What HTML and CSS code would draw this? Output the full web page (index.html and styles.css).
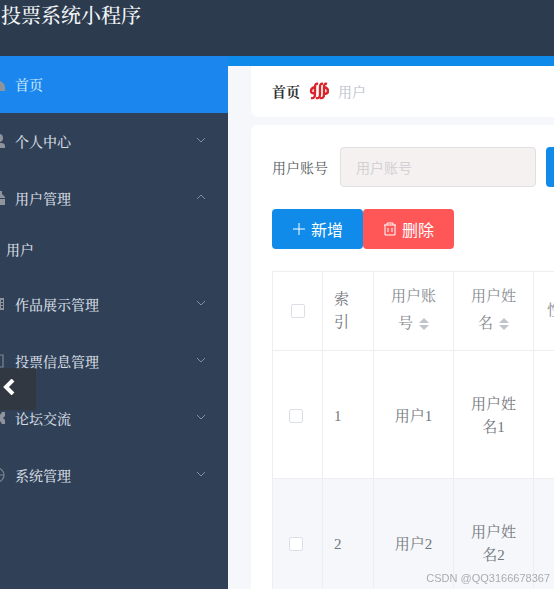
FILE: index.html
```html
<!DOCTYPE html>
<html lang="zh-CN">
<head>
  <meta charset="UTF-8">
  <meta name="viewport" content="width=device-width, initial-scale=1.0">
  <title>投票系统小程序</title>
  <link rel="stylesheet" href="styles.css">
</head>
<body>
  <header class="navbar">
    <h1 class="title">投票系统小程序</h1>
  </header>
  <div class="layout">
    <nav class="sidebar">
      <a class="menu-item active" href="#">
        <svg class="menu-icon" viewBox="0 0 18 18"><path d="M9 3l7 5q2 1 2 4v4h-6v-4H7v4H1V9z"/></svg>
        <span class="menu-text">首页</span>
      </a>
      <a class="menu-item" href="#">
        <svg class="menu-icon" viewBox="0 0 18 18"><circle cx="12" cy="6" r="4"/><path d="M5 16v-2q0-3 4-3h5q4 0 4 3v2z"/></svg>
        <span class="menu-text">个人中心</span>
        <svg class="arrow" viewBox="0 0 10 6"><path d="M1 1l4 4 4-4"/></svg>
      </a>
      <a class="menu-item" href="#">
        <svg class="menu-icon" viewBox="0 0 18 18"><path d="M1 5h5V2h9v3l3 3v1H1zM1 10h17v6H1z"/></svg>
        <span class="menu-text">用户管理</span>
        <svg class="arrow" viewBox="0 0 10 6"><path d="M1 5l4-4 4 4"/></svg>
      </a>
      <a class="submenu-item" href="#">用户</a>
      <a class="menu-item" href="#">
        <svg class="menu-icon" viewBox="0 0 18 18"><path fill-rule="evenodd" d="M2 3h15v12H2zM14 5v2h2V5zM14 8v2h2V8zM14 11v2h2v-2z"/></svg>
        <span class="menu-text">作品展示管理</span>
        <svg class="arrow" viewBox="0 0 10 6"><path d="M1 1l4 4 4-4"/></svg>
      </a>
      <a class="menu-item" href="#">
        <svg class="menu-icon line" viewBox="0 0 18 18"><path d="M3 3h13v12H3z"/></svg>
        <span class="menu-text">投票信息管理</span>
        <svg class="arrow" viewBox="0 0 10 6"><path d="M1 1l4 4 4-4"/></svg>
      </a>
      <a class="menu-item" href="#">
        <svg class="menu-icon" viewBox="0 0 18 18"><path d="M1 3h9l3 3 2-3h3v4l-2 2 2 2v4h-3l-2-3-3 3H1z"/></svg>
        <span class="menu-text">论坛交流</span>
        <svg class="arrow" viewBox="0 0 10 6"><path d="M1 1l4 4 4-4"/></svg>
      </a>
      <a class="menu-item" href="#">
        <svg class="menu-icon line" viewBox="0 0 18 18"><circle cx="10" cy="9" r="7"/><path d="M3 9h14M10 2v14"/></svg>
        <span class="menu-text">系统管理</span>
        <svg class="arrow" viewBox="0 0 10 6"><path d="M1 1l4 4 4-4"/></svg>
      </a>
    </nav>

    <main class="main">
      <div class="breadcrumb">
        <a class="crumb-home" href="#">首页</a>
        <svg class="crumb-icon" viewBox="0 0 20 18"><path d="M9 2Q6 1 6 5v7q0 5-4 4M14 2q-3-1-3 3v7q0 5-4 4M18 2q-3-1-3 3v7q0 5-4 4M6 5Q2 6 2 9t4 2M15 5q4 1 4 4t-4 3"/></svg>
        <span class="crumb-current">用户</span>
      </div>

      <section class="panel">
        <form class="search">
          <label class="search-label" for="account">用户账号</label>
          <input class="search-input" id="account" type="text" placeholder="用户账号">
          <button class="btn btn-primary" type="button">查询</button>
        </form>
        <div class="actions">
          <button class="btn btn-primary" type="button">
            <svg class="btn-icon" viewBox="0 0 14 14"><path d="M7 1v12M1 7h12"/></svg>新增
          </button>
          <button class="btn btn-danger" type="button">
            <svg class="btn-icon" viewBox="0 0 14 14"><path d="M1 3h12M4 3V1h6v2M2 3v10h10V3M5 6v4M9 6v4"/></svg>删除
          </button>
        </div>
        <table class="table">
          <colgroup>
            <col class="col-check"><col class="col-index"><col class="col-data"><col class="col-data"><col class="col-data">
          </colgroup>
          <thead>
            <tr>
              <th><input type="checkbox" aria-label="全选"></th>
              <th class="index">索引</th>
              <th class="sortable">用户账号 <svg class="sort" viewBox="0 0 10 12"><path d="M0 5l5-5 5 5zM0 7h10l-5 5z"/></svg></th>
              <th class="sortable">用户姓名 <svg class="sort" viewBox="0 0 10 12"><path d="M0 5l5-5 5 5zM0 7h10l-5 5z"/></svg></th>
              <th class="sortable gender">性别 <svg class="sort" viewBox="0 0 10 12"><path d="M0 5l5-5 5 5zM0 7h10l-5 5z"/></svg></th>
            </tr>
          </thead>
          <tbody>
            <tr>
              <td class="check"><input type="checkbox" aria-label="选择用户1"></td>
              <td class="index">1</td>
              <td>用户1</td>
              <td>用户姓名1</td>
              <td></td>
            </tr>
            <tr>
              <td class="check"><input type="checkbox" aria-label="选择用户2"></td>
              <td class="index">2</td>
              <td>用户2</td>
              <td>用户姓名2</td>
              <td></td>
            </tr>
          </tbody>
        </table>
      </section>
    </main>
  </div>

  <button class="prev" type="button" aria-label="上一张">
    <svg viewBox="0 0 12 16"><path d="M10 1L3 8l7 7"/></svg>
  </button>
  <div class="watermark">CSDN @QQ3166678367</div>
</body>
</html>
```
FILE: styles.css
```css
* {
  box-sizing: border-box;
}
body {
  margin: 0;
  font-family: "Liberation Serif", "Noto Serif CJK SC", "Noto Sans CJK SC", serif;
  font-size: 14px;
  background: #f5f7fa;
  overflow: hidden;
}
a {
  color: inherit;
  text-decoration: none;
}
.navbar {
  height: 56px;
  padding-left: 1px;
  background: #2c3b4d;
}
.title {
  margin: 0;
  font-size: 20px;
  font-weight: 500;
  line-height: 32px;
  color: #f2f5f8;
}
.layout {
  display: flex;
  height: calc(100vh - 56px);
}
.sidebar {
  flex: 0 0 228px;
  background: #304056;
  color: #d3dae2;
  font-weight: 500;
  overflow: hidden;
}
.menu-item {
  display: flex;
  align-items: center;
  gap: 10px;
  height: 57px;
  padding: 0 22px 2px 0;
}
.menu-item.active {
  background: #1b87ee;
  color: #c5e6fb;
}
/* icons are tucked under the left edge */
.menu-icon {
  flex: none;
  width: 18px;
  height: 18px;
  margin-left: -13px;
  fill: #8f949c;
}
.menu-icon.line {
  fill: none;
  stroke: #7f8894;
  stroke-width: 1.2;
}
.menu-text {
  flex: 1;
}
.arrow {
  width: 10px;
  height: 6px;
  margin-bottom: 2px;
  fill: none;
  stroke: #8090a0;
}
.submenu-item {
  display: block;
  height: 49px;
  padding-left: 6px;
  line-height: 48px;
}
.main {
  flex: 1;
  min-width: 0;
  padding-left: 23px;
  border-top: 10px solid #0e8bea;
  overflow: hidden;
}
.breadcrumb {
  display: flex;
  align-items: center;
  gap: 9px;
  height: 51px;
  padding: 0 0 2px 21px;
  background: #fff;
  border-radius: 0 0 0 8px;
}
.crumb-home {
  font-weight: 700;
  color: #303133;
}
.crumb-icon {
  width: 20px;
  height: 18px;
  fill: none;
  stroke: #d9252b;
  stroke-width: 2.4;
}
.crumb-current {
  color: #b9bec9;
}
.panel {
  min-height: 100%;
  margin-top: 8px;
  padding: 22px 0 0 21px;
  background: #fff;
  border-radius: 6px 0 0 0;
}
.search {
  display: flex;
  align-items: center;
  color: #555a60;
}
.search-label {
  flex: none;
}
.search-input {
  flex: none;
  width: 196px;
  height: 40px;
  margin: 0 10px 0 12px;
  padding: 0 15px;
  border: 1px solid #e0e0e2;
  border-radius: 4px;
  background: #f4f1f0;
  font-family: "Noto Sans CJK SC", sans-serif;
  font-size: 14px;
}
.search-input::placeholder {
  color: #d2d2d6;
}
.btn {
  display: flex;
  flex: none;
  align-items: center;
  gap: 5px;
  height: 40px;
  padding: 0 19px;
  border: 1px solid transparent;
  border-radius: 4px;
  color: #fff;
  font-family: "Noto Sans CJK SC", sans-serif;
  font-size: 16px;
}
.btn-primary {
  background: #108bea;
}
.btn-danger {
  background: #ff5758;
}
.btn-icon {
  width: 14px;
  height: 14px;
  fill: none;
  stroke: #fff;
}
.actions {
  display: flex;
  margin: 22px 0;
}
.table {
  width: 342px;
  table-layout: fixed;
  border-collapse: collapse;
  color: #73767b;
  font-size: 15px;
}
.col-check {
  width: 50px;
}
.col-index {
  width: 51px;
}
.col-data {
  width: 80px;
}
.table th,
.table td {
  padding: 12px 16px;
  border: 1px solid #eceef2;
  font-weight: 400;
  line-height: 23px;
  text-align: center;
}
.table td {
  padding: 42px 16px 39px;
}
.table td.check {
  padding-right: 20px;
}
.table .index {
  padding-left: 11px;
  text-align: left;
}
.table th.sortable {
  padding: 11px 16px 13px;
  color: #85888e;
  line-height: 27px;
}
.table th.gender {
  padding-left: 13px;
  text-align: left;
  white-space: nowrap;
}
.table tbody tr:nth-child(even) {
  background: #f5f7fb;
}
.table input {
  display: block;
  width: 14px;
  height: 14px;
  margin: 0 auto;
  appearance: none;
  border: 1px solid #dcdfe6;
  border-radius: 2px;
  background: #fff;
}
.sort {
  width: 10px;
  height: 12px;
  margin-left: 2px;
  vertical-align: -2px;
  fill: #c0c4cc;
}
.prev {
  position: fixed;
  top: 368px;
  left: 0;
  width: 36px;
  height: 42px;
  padding: 0 3px 4px;
  border: none;
  background: rgba(51, 54, 60, 0.8);
}
.prev svg {
  display: block;
  width: 12px;
  height: 16px;
  fill: none;
  stroke: #fff;
  stroke-width: 4;
}
.watermark {
  position: fixed;
  right: 4px;
  bottom: 3px;
  font-family: "Liberation Sans", sans-serif;
  font-size: 11px;
  line-height: 16px;
  color: #a9acb2;
}
```
